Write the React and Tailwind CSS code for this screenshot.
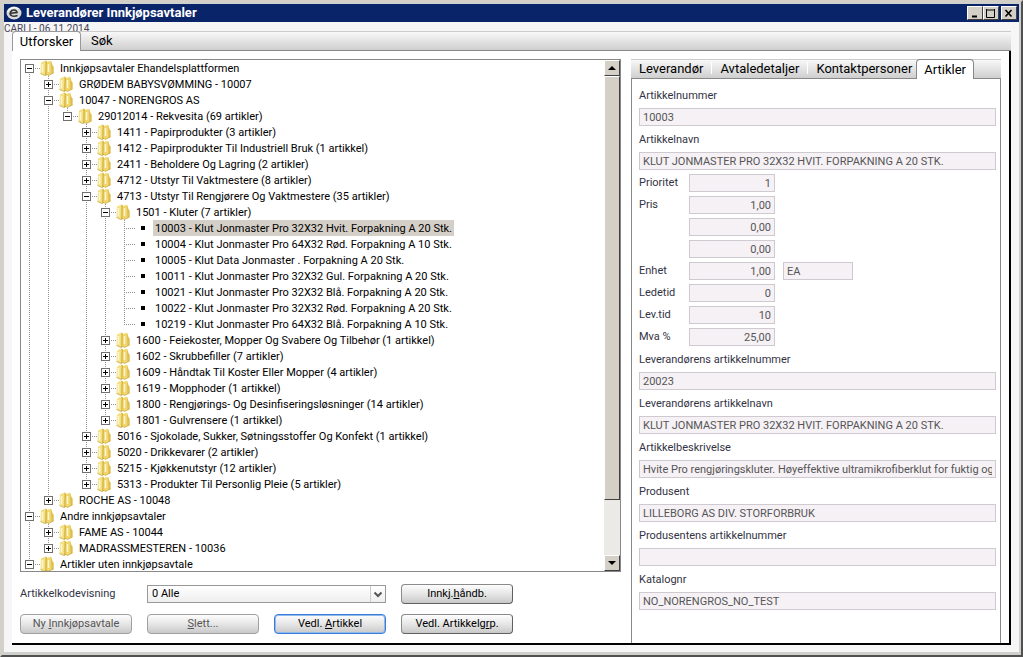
const tree = [
  { t: 'Innkjøpsavtaler Ehandelsplattformen', c: [
    { t: 'GRØDEM BABYSVØMMING - 10007' },
    { t: '10047 - NORENGROS AS', c: [
      { t: '29012014 - Rekvesita (69 artikler)', c: [
        { t: '1411 - Papirprodukter (3 artikler)' },
        { t: '1412 - Papirprodukter Til Industriell Bruk (1 artikkel)' },
        { t: '2411 - Beholdere Og Lagring (2 artikler)' },
        { t: '4712 - Utstyr Til Vaktmestere (8 artikler)' },
        { t: '4713 - Utstyr Til Rengjørere Og Vaktmestere (35 artikler)', c: [
          { t: '1501 - Kluter (7 artikler)', c: [
            { t: '10003 - Klut Jonmaster Pro 32X32 Hvit. Forpakning A 20 Stk.', leaf: true, sel: true },
            { t: '10004 - Klut Jonmaster Pro 64X32 Rød. Forpakning A 10 Stk.', leaf: true },
            { t: '10005 - Klut Data Jonmaster . Forpakning A 20 Stk.', leaf: true },
            { t: '10011 - Klut Jonmaster Pro 32X32 Gul. Forpakning A 20 Stk.', leaf: true },
            { t: '10021 - Klut Jonmaster Pro 32X32 Blå. Forpakning A 20 Stk.', leaf: true },
            { t: '10022 - Klut Jonmaster Pro 32X32 Rød. Forpakning A 20 Stk.', leaf: true },
            { t: '10219 - Klut Jonmaster Pro 64X32 Blå. Forpakning A 10 Stk.', leaf: true },
          ] },
          { t: '1600 - Feiekoster, Mopper Og Svabere Og Tilbehør (1 artikkel)' },
          { t: '1602 - Skrubbefiller (7 artikler)' },
          { t: '1609 - Håndtak Til Koster Eller Mopper (4 artikler)' },
          { t: '1619 - Mopphoder (1 artikkel)' },
          { t: '1800 - Rengjørings- Og Desinfiseringsløsninger (14 artikler)' },
          { t: '1801 - Gulvrensere (1 artikkel)' },
        ] },
        { t: '5016 - Sjokolade, Sukker, Søtningsstoffer Og Konfekt (1 artikkel)' },
        { t: '5020 - Drikkevarer (2 artikler)' },
        { t: '5215 - Kjøkkenutstyr (12 artikler)' },
        { t: '5313 - Produkter Til Personlig Pleie (5 artikler)' },
      ] },
    ] },
    { t: 'ROCHE AS - 10048' },
  ] },
  { t: 'Andre innkjøpsavtaler', c: [
    { t: 'FAME AS - 10044' },
    { t: 'MADRASSMESTEREN - 10036' },
  ] },
  { t: 'Artikler uten innkjøpsavtale', c: [] },
]

function flatten(nodes, guides = []) {
  return nodes.flatMap((n, i) => {
    const last = i === nodes.length - 1
    const first = guides.length === 0 && i === 0
    return [{ ...n, guides, last, first }, ...flatten(n.c || [], [...guides, !last])]
  })
}

const rows = flatten(tree)

function Dots({ d }) {
  return <path d={d} stroke="#909090" strokeDasharray="1 1" fill="none" shapeRendering="crispEdges" />
}

function Guide({ on }) {
  return (
    <svg width="19" height="16" className="shrink-0" aria-hidden="true">
      {on && <Dots d="M8.5 0V16" />}
    </svg>
  )
}

function Joint({ row }) {
  return (
    <svg width="19" height="16" className="shrink-0" aria-hidden="true">
      <Dots d={row.first ? 'M8.5 8V16' : row.last ? 'M8.5 0V8' : 'M8.5 0V16'} />
      <Dots d="M8 8.5H19" />
      {!row.leaf && (
        <g shapeRendering="crispEdges">
          <rect x="4.5" y="4.5" width="8" height="8" fill="#fff" stroke="#707070" />
          <path d={row.c ? 'M6 8.5H11' : 'M6 8.5H11M8.5 6V11'} stroke="#000" />
        </g>
      )}
    </svg>
  )
}

function Folder() {
  return (
    <svg width="14" height="16" viewBox="0 0 14 16" className="shrink-0" aria-hidden="true">
      <path d="M1 2.500 5.500.5 7 1.500V14l-2 1.500L.5 13.500z" fill="#f3e085" />
      <path d="M5.500.5 7 1.500V15l-2 .5z" fill="#d8b848" />
      <path d="M7 2 11 .8l1.500 4.700 1 1V13L8 15.500 6.500 14z" fill="#f0d66c" />
      <path d="M11 .8l1.500 4.700 1 1V13l-2 1z" fill="#dcbd52" />
      <path d="M2.500 4v8.500M8.500 4v8" stroke="#fdf7cf" strokeWidth="1.500" />
      <path d="M.5 13.500 5 15.500l2-1.200 1 1.200 5.500-2.500" stroke="#cba945" strokeWidth=".8" fill="none" />
    </svg>
  )
}

function Bullet() {
  return (
    <svg width="14" height="16" className="shrink-0" aria-hidden="true">
      <rect x="6" y="6" width="4" height="4" fill="#000" />
    </svg>
  )
}

function TreeRow({ row }) {
  return (
    <li className="flex h-4 items-center">
      {row.guides.map((g, i) => <Guide key={i} on={g} />)}
      <Joint row={row} />
      {row.leaf ? <Bullet /> : <Folder />}
      <span className={row.sel ? 'ml-1 bg-[#d4d0c8] px-0.5 pt-px leading-[15px]' : 'ml-1 px-0.5 pt-px leading-[15px]'}>{row.t}</span>
    </li>
  )
}

function ScrollButton({ label, d }) {
  return (
    <button aria-label={label} className="flex h-4 w-4 items-center justify-center border border-t-white border-l-white border-r-[#404040] border-b-[#404040] bg-[#d4d0c8]">
      <svg width="8" height="4"><path d={d} fill="#000" /></svg>
    </button>
  )
}

function Button({ children, disabled, focus }) {
  const base = 'h-5 w-28 rounded-sm border bg-linear-to-b from-[#fdfdfd] via-[#e6e6e6] to-[#c9c9c9] text-center leading-4 '
  const look = disabled
    ? 'border-[#a0a0a0] text-[#555]'
    : focus
      ? 'border-[#3a7bd5] ring-1 ring-inset ring-[#8fb8ee]'
      : 'border-[#8a8a8a] border-b-[#606060] border-r-[#606060]'
  return <button disabled={disabled} className={base + look}>{children}</button>
}

const box = 'h-[18px] min-w-0 border border-[#cfcacf] bg-[#f5f1f5] px-[3px] text-[#555]'

function Wide({ id, label, value }) {
  return (
    <>
      <label htmlFor={id} className="pt-px leading-[21px]">{label}</label>
      <div className="flex h-[22px] items-center">
        <input id={id} readOnly defaultValue={value} className={box + ' w-full'} />
      </div>
    </>
  )
}

function Small({ id, label, value, unit, name }) {
  return (
    <div className="flex h-[22px] items-center">
      <label htmlFor={id} className="w-[50px]">{label}</label>
      <input id={id} readOnly aria-label={name} defaultValue={value} className={box + ' w-[86px] text-right'} />
      {unit && <input readOnly aria-label="Enhetskode" defaultValue={unit} className={box + ' ml-2 w-[70px]'} />}
    </div>
  )
}

function Caption({ label, children, className = '' }) {
  return (
    <button aria-label={label} className={'flex h-3.5 w-4 items-center justify-center border border-t-white border-l-white border-r-[#404040] border-b-[#404040] bg-[#d4d0c8] ' + className}>
      <svg width="10" height="9" viewBox="0 0 10 9" stroke="#000" fill="none">{children}</svg>
    </button>
  )
}

export default function App() {
  return (
    <div className="flex min-h-screen flex-col border-2 border-t-[#d4d0c8] border-l-[#d4d0c8] border-r-[#505050] border-b-[#505050] bg-[#d0d0cc] px-0.5 pt-0.5 pb-[3px] font-[Roboto,sans-serif] text-[11px] text-black">
      <header className="flex h-[18px] shrink-0 items-center bg-[#0a246a] px-0.5 text-white">
        <svg width="16" height="16" viewBox="0 0 16 16" aria-hidden="true">
          <ellipse cx="8" cy="8" rx="7.500" ry="6.500" fill="#d8d8d8" />
          <path d="M4.500 8.300 11 7.500C10.500 4.500 6 4 4.500 7S6.500 12.500 11.500 10.500" fill="none" stroke="#333" strokeWidth="1.600" />
          <path d="M2 6.500C3 2.500 10 1.500 12.500 4" fill="none" stroke="#fff" strokeWidth="1.200" />
        </svg>
        <h1 className="ml-1 flex-1 text-[13px] leading-4 font-bold">Leverandører Innkjøpsavtaler</h1>
        <Caption label="Minimer"><path d="M2 7.500h5" strokeWidth="2" /></Caption>
        <Caption label="Maksimer"><path d="M.5 1h8M.5 0v8.500h8V0" /></Caption>
        <Caption label="Lukk" className="ml-0.5"><path d="M1.500 1l6 6.500M7.500 1l-6 6.500" strokeWidth="1.600" /></Caption>
      </header>

      <main className="flex flex-1 flex-col bg-[#f6f6f6] pr-2 pb-[7px]">
        <p className="h-[9px] text-[10px] leading-[14px] text-[#445]">CARLI - 06.11.2014</p>
        <nav className="relative ml-2 flex h-5 items-end border-t border-b border-t-[#ccc] border-b-[#888] bg-linear-to-b from-[#f8f8f8] to-[#cfcfcf] text-[13px]">
          <button className="-mb-px h-5 w-[69px] rounded-t-sm border border-b-0 border-[#999] bg-white leading-4">Utforsker</button>
          <button className="-mb-px h-5 px-2.5 leading-4">Søk</button>
        </nav>

        <div className="ml-2 flex flex-1 border-r-2 border-b-2 border-black bg-white pt-2 pr-2 pl-2">
          <section className="flex w-[601px] shrink-0 flex-col">
            <div className="flex h-[513px] border border-[#888]">
              <ul className="min-w-0 flex-1 overflow-hidden">
                {rows.map((r) => <TreeRow key={r.t} row={r} />)}
              </ul>
              <div className="flex w-4 flex-col bg-[#eceae6]">
                <ScrollButton label="Rull opp" d="M0 4h8L4 0z" />
                <div className="h-[424px] border border-t-white border-l-white border-r-[#404040] border-b-[#404040] bg-[#d4d0c8]" />
                <div className="flex-1" />
                <ScrollButton label="Rull ned" d="M0 0h8L4 4z" />
              </div>
            </div>
            <div className="mt-3 grid grid-cols-[repeat(4,112px)] items-center gap-x-[15px] gap-y-2.5">
              <label htmlFor="kode" className="text-[#334]">Artikkelkodevisning</label>
              <div className="col-span-2 grid items-center">
                <select id="kode" className="col-start-1 row-start-1 h-[18px] appearance-none border border-[#999] bg-linear-to-b from-white to-[#eee] px-1">
                  <option>0 Alle</option>
                </select>
                <svg width="16" height="16" className="pointer-events-none col-start-1 row-start-1 justify-self-end" fill="none" aria-hidden="true">
                  <path d="M.5 0v16" stroke="#ccc" />
                  <path d="M4.500 6.500 8 10l3.500-3.500" stroke="#555" strokeWidth="2" />
                </svg>
              </div>
              <Button>Innkj.<u>h</u>åndb.</Button>
              <Button disabled>Ny <u>I</u>nnkjøpsavtale</Button>
              <Button disabled><u>S</u>lett...</Button>
              <Button focus>Vedl. <u>A</u>rtikkel</Button>
              <Button>Vedl. Artikkelg<u>r</u>p.</Button>
            </div>
          </section>

          <section className="ml-2.5 flex min-w-0 flex-1 flex-col">
            <nav className="flex h-5 items-end border-t border-b border-t-[#ccc] border-b-[#888] bg-linear-to-b from-[#f8f8f8] to-[#cfcfcf] text-[13px] leading-4">
              <button className="-mb-px h-5 px-2">Leverandør</button>
              <span className="mb-1 h-3 w-px bg-white" />
              <button className="-mb-px h-5 px-2">Avtaledetaljer</button>
              <span className="mb-1 h-3 w-px bg-white" />
              <button className="-mb-px h-5 pr-1 pl-2">Kontaktpersoner</button>
              <button className="-mb-px h-5 rounded-t-sm border border-b-0 border-[#888] bg-white px-[7px]">Artikler</button>
            </nav>
            <form className="flex flex-1 flex-col border-r border-l border-[#888] pt-[5px] pr-1 pl-[7px] text-[#334]">
              <Wide id="nr" label="Artikkelnummer" value="10003" />
              <Wide id="navn" label="Artikkelnavn" value="KLUT JONMASTER PRO 32X32 HVIT. FORPAKNING A 20 STK." />
              <Small id="pri" label="Prioritet" value="1" />
              <Small id="pris" label="Pris" value="1,00" />
              <Small id="pris2" name="Pris 2" value="0,00" />
              <Small id="pris3" name="Pris 3" value="0,00" />
              <Small id="enhet" label="Enhet" value="1,00" unit="EA" />
              <Small id="lede" label="Ledetid" value="0" />
              <Small id="lev" label="Lev.tid" value="10" />
              <Small id="mva" label="Mva %" value="25,00" />
              <Wide id="lnr" label="Leverandørens artikkelnummer" value="20023" />
              <Wide id="lnavn" label="Leverandørens artikkelnavn" value="KLUT JONMASTER PRO 32X32 HVIT. FORPAKNING A 20 STK." />
              <Wide id="besk" label="Artikkelbeskrivelse" value="Hvite Pro rengjøringskluter. Høyeffektive ultramikrofiberklut for fuktig og" />
              <Wide id="prod" label="Produsent" value="LILLEBORG AS DIV. STORFORBRUK" />
              <Wide id="pnr" label="Produsentens artikkelnummer" value="" />
              <Wide id="kat" label="Katalognr" value="NO_NORENGROS_NO_TEST" />
            </form>
          </section>
        </div>
      </main>
    </div>
  )
}
